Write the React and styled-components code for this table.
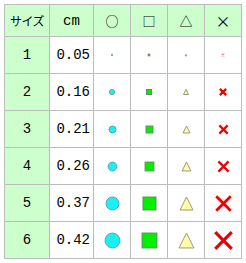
import React from 'react'
import styled, { createGlobalStyle } from 'styled-components'

const GlobalStyle = createGlobalStyle`
  body {
    margin: 0;
    background: #ffffff;
  }
`

const Page = styled.div`
  padding: 4px;
`

const Grid = styled.div`
  display: grid;
  grid-template-columns: 44px 43px 36px 36px 36px 36px;
  grid-template-rows: 31px repeat(6, 36px);
  gap: 1px;
  padding: 1px;
  width: max-content;
  background: #bcbcbc;
`

const Cell = styled.div`
  display: flex;
  align-items: center;
  justify-content: ${(p) => (p.$right ? 'flex-end' : 'center')};
  padding-right: ${(p) => (p.$right ? '3px' : '0')};
  background: ${(p) => (p.$head ? '#ccffcc' : '#ffffff')};
  color: #000000;
  font-family: 'Liberation Mono', 'DejaVu Sans Mono', monospace;
  font-size: 14px;
`

const Kana = styled.span`
  font-family: 'Noto Sans CJK JP', sans-serif;
  font-size: 12px;
  letter-spacing: -0.5px;
`

const Symbol = styled.span`
  font-family: 'Noto Sans CJK JP', sans-serif;
  font-size: ${(p) => p.$size || 13}px;
  line-height: 1;
`

const PX_PER_CM = 37.8

const rows = [
  { n: 1, cm: '0.05' },
  { n: 2, cm: '0.16' },
  { n: 3, cm: '0.21' },
  { n: 4, cm: '0.26' },
  { n: 5, cm: '0.37' },
  { n: 6, cm: '0.42' },
]

const Shape = ({ kind, cm }) => {
  const s = Math.max(parseFloat(cm) * PX_PER_CM, 2.6)
  const box = Math.ceil(s * 1.3) + 4
  const c = box / 2
  if (kind === 'circle') {
    return (
      <svg width={box} height={box}>
        <circle cx={c} cy={c} r={s / 2 - 0.5} fill="#19f0f5" stroke="#5aa6b0" strokeWidth="1" />
      </svg>
    )
  }
  if (kind === 'square') {
    const h = s / 2 - 0.5
    return (
      <svg width={box} height={box}>
        <rect x={c - h} y={c - h} width={h * 2} height={h * 2} fill="#00f000" stroke="#5f8f5f" strokeWidth="1" />
      </svg>
    )
  }
  if (kind === 'triangle') {
    const h = s / 2 - 0.5
    return (
      <svg width={box} height={box}>
        <polygon
          points={`${c},${c - h} ${c + h},${c + h} ${c - h},${c + h}`}
          fill="#ffffa8"
          stroke="#9a9a7a"
          strokeWidth="1"
          strokeLinejoin="round"
        />
      </svg>
    )
  }
  const h = s * 0.52
  const w = Math.max(2.2, s * 0.2)
  return (
    <svg width={box} height={box}>
      <path
        d={`M${c - h} ${c - h} L${c + h} ${c + h} M${c + h} ${c - h} L${c - h} ${c + h}`}
        stroke={s < 3 ? '#f29090' : '#ee0000'}
        strokeWidth={s < 3 ? 1.2 : w}
      />
    </svg>
  )
}

const kinds = ['circle', 'square', 'triangle', 'cross']

export default function App() {
  return (
    <Page>
      <GlobalStyle />
      <Grid>
        <Cell $head><Kana>サイズ</Kana></Cell>
        <Cell $head>cm</Cell>
        <Cell $head><Symbol>○</Symbol></Cell>
        <Cell $head><Symbol>□</Symbol></Cell>
        <Cell $head><Symbol>△</Symbol></Cell>
        <Cell $head><Symbol $size={15}>×</Symbol></Cell>
        {rows.map((r) => (
          <React.Fragment key={r.n}>
            <Cell $head>{r.n}</Cell>
            <Cell $right>{r.cm}</Cell>
            {kinds.map((k) => (
              <Cell key={k}><Shape kind={k} cm={r.cm} /></Cell>
            ))}
          </React.Fragment>
        ))}
      </Grid>
    </Page>
  )
}
